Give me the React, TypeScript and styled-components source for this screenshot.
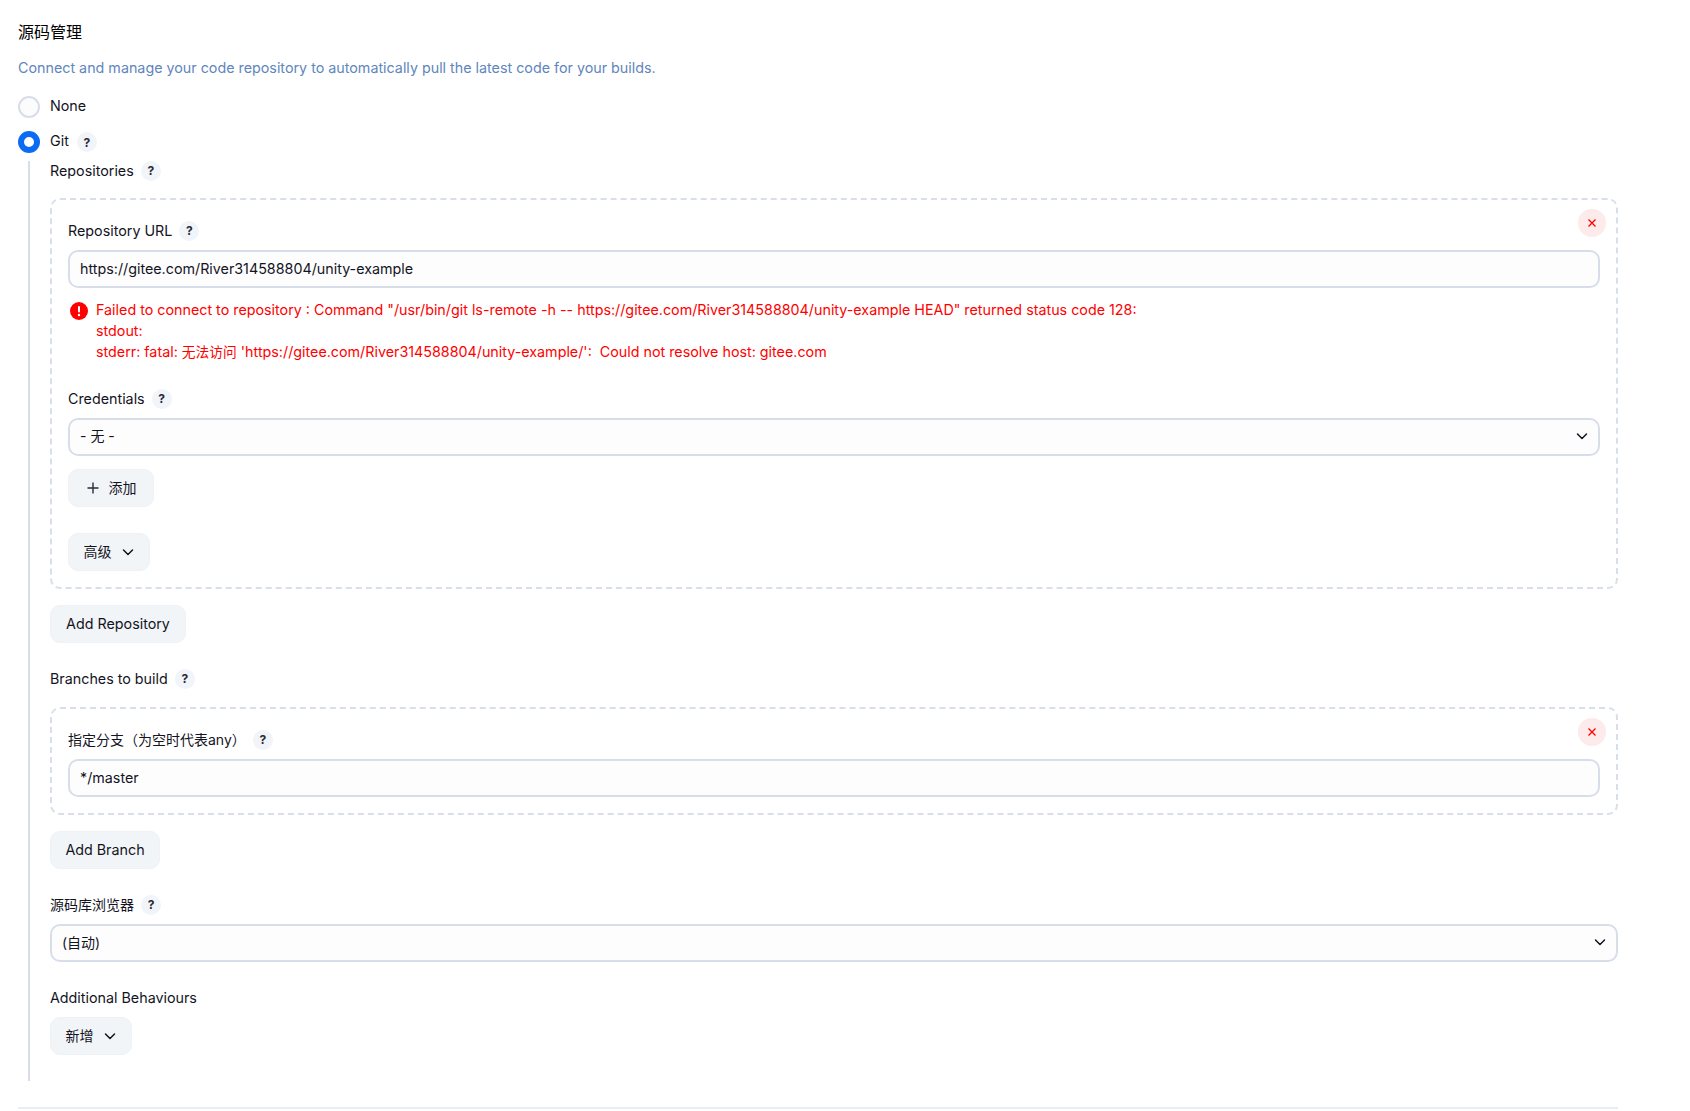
import React from "react";
import styled, { createGlobalStyle } from "styled-components";

const Global = createGlobalStyle`
  html, body { margin: 0; background: #fff; }
  body {
    font-family: "Inter", "Noto Sans CJK SC", sans-serif;
    font-size: 14.3px;
    color: #14141f;
  }
  * { box-sizing: border-box; }
`;

const Page = styled.div`
  width: 1618px;
  height: 1111px;
  padding: 0 0 0 18px;
  overflow: hidden;
`;
const Title = styled.div`
  height: 21px;
  margin-top: 22px;
  font-size: 16px;
  line-height: 21px;
  color: #000;
`;
const Description = styled.div`
  margin-top: 14px;
  height: 21px;
  line-height: 21px;
  color: #5f86bd;
`;
const RadioRow = styled.div<{ $top: number }>`
  display: flex;
  align-items: center;
  height: 22px;
  margin-top: ${(p) => p.$top}px;
  gap: 8px;
`;
const Radio = styled.span<{ $on?: boolean }>`
  width: 22px;
  height: 22px;
  margin-right: 2px;
  border-radius: 50%;
  background: ${(p) => (p.$on ? "#fff" : "#fcfcfd")};
  border: ${(p) => (p.$on ? "6.5px solid #0b6bf5" : "2px solid #d8dee9")};
`;
const RadioText = styled.span`
  padding-bottom: 3px;
`;
const Nested = styled.div`
  margin: 8px 0 0 10px;
  border-left: 2px solid #d8dee9;
  padding-left: 20px;
  height: 920px;
`;
const LabelRow = styled.div<{ $top?: number; $bottom?: number }>`
  display: flex;
  align-items: center;
  gap: 7px;
  height: 20px;
  line-height: 20px;
  margin-top: ${(p) => p.$top ?? 0}px;
  margin-bottom: ${(p) => p.$bottom ?? 0}px;
`;
const CjkLabel = styled.span`
  font-size: 14px;
`;
const RaisedCjk = styled(CjkLabel)`
  margin-bottom: 2px;
`;
const CjkError = styled.span`
  font-size: 13.75px;
`;
const Help = styled.span`
  width: 20px;
  height: 20px;
  border-radius: 50%;
  background: #f1f4f8;
  display: flex;
  align-items: center;
  justify-content: center;
  font-size: 12px;
  font-weight: 700;
  color: #2a2a35;
`;
const RepeatBox = styled.div<{ $height: number }>`
  position: relative;
  height: ${(p) => p.$height}px;
  border: 2px dashed #d8dfe9;
  border-radius: 10px;
  padding: 21px 16px 0;
`;
const Remove = styled.span`
  position: absolute;
  top: 9px;
  right: 10px;
  width: 28px;
  height: 28px;
  border-radius: 50%;
  background: #fdeaea;
  display: flex;
  align-items: center;
  justify-content: center;
`;
const Field = styled.div`
  height: 38px;
  border: 2px solid #d8dee9;
  border-radius: 10px;
  background: #fdfdfe;
  padding: 0 9px 2px 10px;
  display: flex;
  align-items: center;
  justify-content: space-between;
  margin-top: 9px;
`;
const ErrorBlock = styled.div`
  display: flex;
  gap: 8px;
  margin-top: 11px;
  margin-bottom: 26px;
  margin-left: 2px;
  color: #f00;
  line-height: 21px;
`;
const ErrorIcon = styled.svg`
  flex: none;
  margin-top: 3px;
`;
const Button = styled.div<{ $top: number; $width: number }>`
  display: flex;
  align-items: center;
  justify-content: center;
  gap: 9px;
  height: 38px;
  padding-bottom: 1px;
  width: ${(p) => p.$width}px;
  margin-top: ${(p) => p.$top}px;
  background: #f2f5f8;
  border: 1px solid #eef1f5;
  border-radius: 10px;
`;
const Divider = styled.div`
  margin-top: 26px;
  width: 1600px;
  height: 2px;
  background: #e9edf4;
`;

const Cross = () => (
  <svg width="12" height="12" viewBox="0 0 12 12" fill="none" stroke="#f00" strokeWidth="1.3">
    <path d="M2.5 2.5l7 7M9.5 2.5l-7 7" />
  </svg>
);
const Chevron = () => (
  <svg width="14" height="14" viewBox="0 0 14 14" fill="none" stroke="#14141f" strokeWidth="1.5" strokeLinecap="round" strokeLinejoin="round">
    <path d="M2.5 5l4.5 4.5L11.5 5" />
  </svg>
);
const Plus = () => (
  <svg width="14" height="14" viewBox="0 0 14 14" fill="none" stroke="#2a2a35" strokeWidth="1.4">
    <path d="M1.5 7h11M7 1.5v11" />
  </svg>
);

export default function App() {
  return (
    <Page>
      <Global />
      <Title>源码管理</Title>
      <Description>Connect and manage your code repository to automatically pull the latest code for your builds.</Description>
      <RadioRow $top={18}>
        <Radio />
        <RadioText>None</RadioText>
      </RadioRow>
      <RadioRow $top={13}>
        <Radio $on />
        <RadioText>Git</RadioText>
        <Help>?</Help>
      </RadioRow>
      <Nested>
        <LabelRow $bottom={17}>
          <span>Repositories</span>
          <Help>?</Help>
        </LabelRow>
        <RepeatBox $height={391}>
          <Remove><Cross /></Remove>
          <LabelRow>
            <span>Repository URL</span>
            <Help>?</Help>
          </LabelRow>
          <Field>https://gitee.com/River314588804/unity-example</Field>
          <ErrorBlock>
            <ErrorIcon width="18" height="18" viewBox="0 0 18 18">
              <circle cx="9" cy="9" r="9" fill="#f00" />
              <rect x="8" y="4" width="2" height="6.5" rx="1" fill="#fff" />
              <circle cx="9" cy="13" r="1.2" fill="#fff" />
            </ErrorIcon>
            <div>
              Failed to connect to repository : Command "/usr/bin/git ls-remote -h -- https://gitee.com/River314588804/unity-example HEAD" returned status code 128:
              <br />
              stdout:
              <br />
              stderr: fatal: <CjkError>无法访问</CjkError> 'https://gitee.com/River314588804/unity-example/':&nbsp; Could not resolve host: gitee.com
            </div>
          </ErrorBlock>
          <LabelRow $bottom={1}>
            <span>Credentials</span>
            <Help>?</Help>
          </LabelRow>
          <Field>
            <RaisedCjk>- 无 -</RaisedCjk>
            <Chevron />
          </Field>
          <Button $top={13} $width={86}>
            <Plus />
            <RaisedCjk>添加</RaisedCjk>
          </Button>
          <Button $top={26} $width={82}>
            <RaisedCjk>高级</RaisedCjk>
            <Chevron />
          </Button>
        </RepeatBox>
        <Button $top={16} $width={136}>Add Repository</Button>
        <LabelRow $top={26} $bottom={18}>
          <span>Branches to build</span>
          <Help>?</Help>
        </LabelRow>
        <RepeatBox $height={108}>
          <Remove><Cross /></Remove>
          <LabelRow>
            <CjkLabel>指定分支（为空时代表any）</CjkLabel>
            <Help>?</Help>
          </LabelRow>
          <Field>*/master</Field>
        </RepeatBox>
        <Button $top={16} $width={110}>Add Branch</Button>
        <LabelRow $top={26}>
          <CjkLabel>源码库浏览器</CjkLabel>
          <Help>?</Help>
        </LabelRow>
        <Field>
          <CjkLabel>(自动)</CjkLabel>
          <Chevron />
        </Field>
        <LabelRow $top={26}>
          <span>Additional Behaviours</span>
        </LabelRow>
        <Button $top={9} $width={82}>
          <RaisedCjk>新增</RaisedCjk>
          <Chevron />
        </Button>
      </Nested>
      <Divider />
    </Page>
  );
}
